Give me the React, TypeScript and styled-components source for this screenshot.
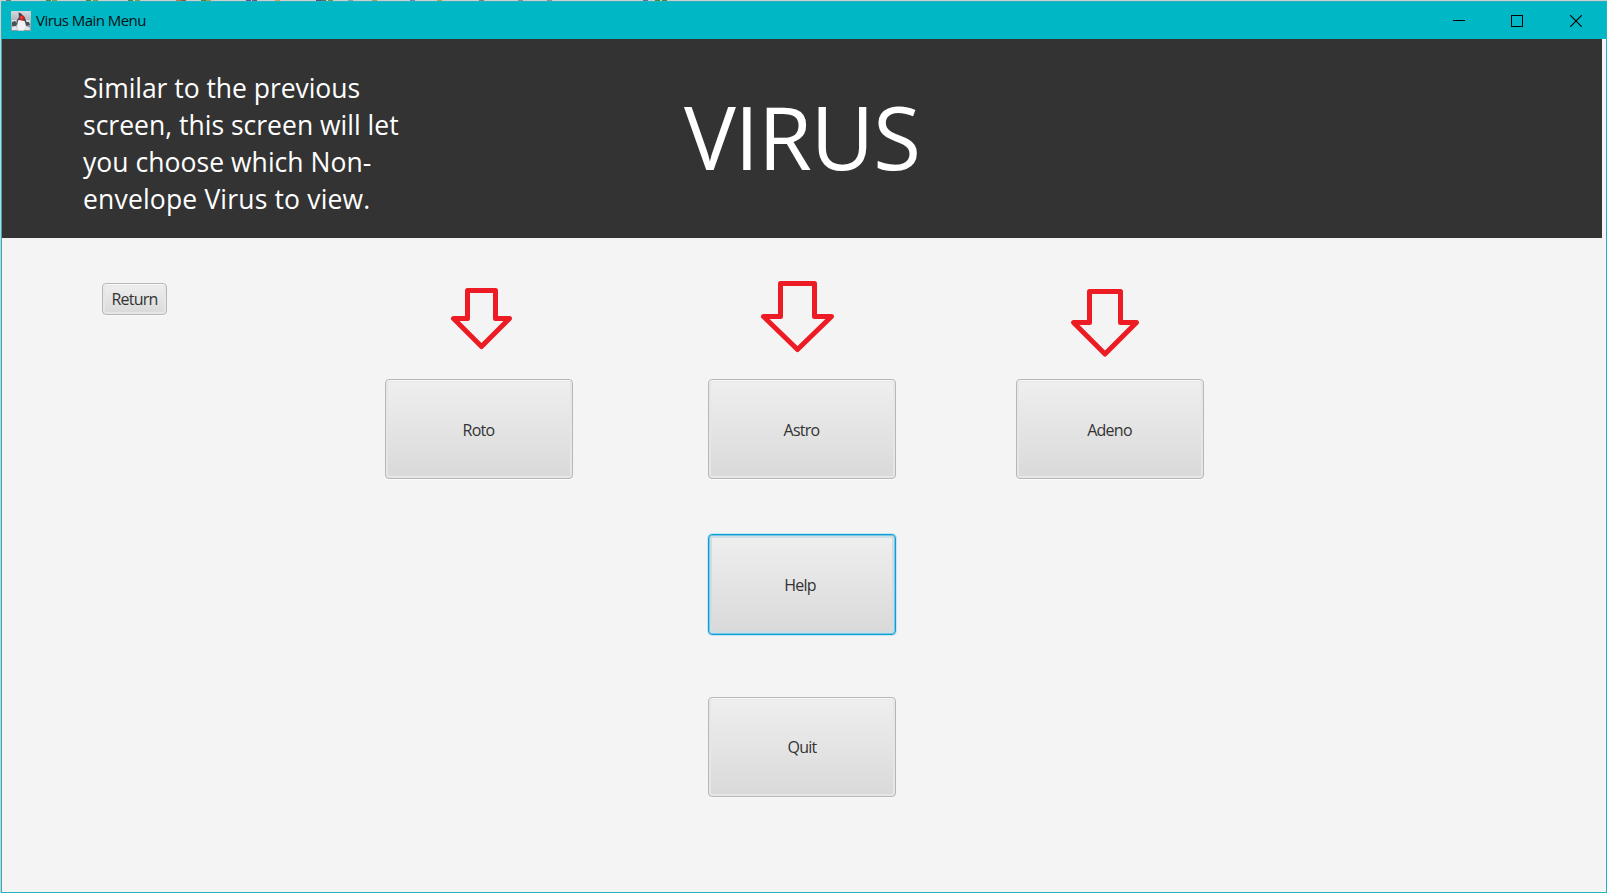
import React from "react";
import styled, { createGlobalStyle } from "styled-components";

const GlobalStyle = createGlobalStyle`
  *, *::before, *::after { box-sizing: border-box; }
  body { margin: 0; overflow: hidden; }
`;

const uiFont = `"Open Sans", "Noto Sans", sans-serif`;

const backdropSpecks = [
  [6, "#5d7f8a"], [46, "#3f8a45"], [52, "#76a04c"], [86, "#3f8a45"], [93, "#76a04c"],
  [128, "#3f8a45"], [135, "#76a04c"], [176, "#b57b4a"], [181, "#8a5a4a"], [201, "#3f8a45"],
  [206, "#b09b45"], [246, "#6b4f9a"], [252, "#5c5f7f"], [275, "#d09a55"], [316, "#5d4a7f"],
  [321, "#3f7a65"], [328, "#5c9a55"], [348, "#7fa0b0"], [372, "#a09b55"], [410, "#6f83b5"],
  [437, "#b0a055"], [479, "#8a7a6a"], [518, "#8a8f95"], [547, "#8a8f95"], [643, "#5d6f9a"],
  [655, "#3f8a45"], [662, "#3f8a45"],
] as const;

const Desktop = styled.div`
  width: 1607px;
  height: 893px;
  padding: 1px 0 0 1px;
  background: ${backdropSpecks
    .map(([x, c]) => `linear-gradient(${c}, ${c}) ${x}px 0 / 5px 1px no-repeat`)
    .join(", ")}, #cbcfcf;
  font-family: ${uiFont};
`;

const Window = styled.main`
  display: flex;
  flex-direction: column;
  width: 1606px;
  height: 892px;
  border: 1px solid #22b2c0;
  background: #f4f4f4;
`;

const TitleBar = styled.header`
  display: flex;
  align-items: center;
  flex: 0 0 37px;
  padding-left: 9px;
  background: #00b7c6;
`;

const WindowTitle = styled.span`
  flex: 1;
  margin: 0 0 2px 5px;
  color: #001214;
  font-size: 15px;
  line-height: 20px;
  letter-spacing: -0.55px;
`;

const WindowControls = styled.div`
  display: flex;
  gap: 46px;
  padding-right: 24px;
  svg { display: block; }
`;

const Banner = styled.section`
  display: flex;
  flex: 0 0 199px;
  width: 1600px;
  padding-left: 81px;
  background: #333;
  color: #fff;
`;

const Note = styled.p`
  width: 340px;
  margin: 31px 0 0;
  font-size: 26.5px;
  line-height: 37px;
  white-space: nowrap;
`;

const NoteLine = styled.span<{ $spacing: number }>`
  display: block;
  letter-spacing: ${(p) => p.$spacing}px;
`;

const Heading = styled.h1`
  margin: 38px 0 0 261px;
  font-size: 87px;
  font-weight: 400;
  line-height: 118px;
  letter-spacing: -1px;
`;

const Menu = styled.section`
  display: grid;
  grid-template-columns: 383px 188px 135px 188px 120px 188px;
  grid-template-rows: 141px 100px 55px 101px 62px 100px;
`;

const Cell = styled.div<{ $col: number; $row: number }>`
  display: flex;
  grid-column: ${(p) => p.$col};
  grid-row: ${(p) => p.$row};
  svg { display: block; }
`;

const MenuButton = styled.button<{ $focused?: boolean }>`
  width: 100%;
  height: 100%;
  padding: ${(p) => (p.$focused ? "0 4px 0 0" : "2px 1px 0 0")};
  border: 1px solid ${(p) => (p.$focused ? "#0f9ed3" : "#b7b7b7")};
  border-radius: 4px;
  background: linear-gradient(#efefef, #d9d9d9);
  box-shadow: ${(p) =>
    p.$focused
      ? "inset 0 0 0 1px #7cc8e4, inset 0 0 0 3px #cfdee4, 0 0 0 1px #c5e7f3"
      : "inset 0 1px 0 #fbfbfb, inset 0 0 0 2px #e6e6e6, 0 1px 0 #fafafa"};
  color: #333;
  font: 400 16px/20px ${uiFont};
  letter-spacing: -0.75px;
`;

const ReturnButton = styled(MenuButton)`
  width: 65px;
  height: 32px;
  margin: 45px 0 0 100px;
  padding: 0 0 1px;
`;

const QuitButton = styled(MenuButton)`
  padding: 0;
`;

type Point = [number, number];

const Arrow = ({ points }: { points: Point[] }) => (
  <svg width="188" height="141" viewBox="0 0 188 141">
    <polygon
      points={points.map((p) => p.join(",")).join(" ")}
      fill="none"
      stroke="#ed1c24"
      strokeWidth="5"
      strokeLinejoin="round"
    />
  </svg>
);

const arrowPoints = (l: number, r: number, top: number, tipL: number, tipR: number, neck: number, bottom: number): Point[] => [
  [l, top], [r, top], [r, neck], [tipR, neck], [(tipL + tipR) / 2, bottom], [tipL, neck], [l, neck],
];

const choices = [
  { label: "Roto", col: 2, arrow: arrowPoints(82.5, 110.5, 52.5, 68.5, 124.5, 80.5, 108.5) },
  { label: "Astro", col: 4, arrow: arrowPoints(72.5, 106.5, 45.5, 55.5, 123.5, 78.5, 111.5) },
  { label: "Adeno", col: 6, arrow: arrowPoints(73.5, 104.5, 53.5, 57.5, 120.5, 84.5, 116) },
];

const AppIcon = () => (
  <svg width="20" height="20" viewBox="0 0 20 20">
    <defs>
      <linearGradient id="tile" x1="0" y1="0" x2="0" y2="1">
        <stop offset="0" stopColor="#d3d8dc" />
        <stop offset="1" stopColor="#8d979e" />
      </linearGradient>
    </defs>
    <rect width="20" height="20" rx="1" fill="url(#tile)" />
    <path d="M1 9h18v3H1z" fill="#dce1e4" />
    <path d="M7.500 1.500l2 .5 4 4 2 5-1 3H6l-.5-4 2.500-4z" fill="#41474c" />
    <path d="M7 9.500l3-1 4 2 1 6-2 3H7l-1-4z" fill="#f3f3f3" />
    <path d="M1 11l3-1 2 2-1 3H1zM15 11l3 0 1 3-4 1z" fill="#4a5157" />
    <path d="M1 16l4-1 2 4H1zM15 15l4 2v2h-5z" fill="#e3e6e8" />
    <circle cx="11" cy="7" r="2.600" fill="#cf2128" />
    <circle cx="10.500" cy="6.500" r="1" fill="#ef5a5e" />
  </svg>
);

export default function App() {
  return (
    <>
      <GlobalStyle />
      <Desktop>
        <Window>
          <TitleBar>
            <AppIcon />
            <WindowTitle>Virus Main Menu</WindowTitle>
            <WindowControls>
              <svg width="12" height="12" shapeRendering="crispEdges"><path d="M0 5.5h12" stroke="#000" /></svg>
              <svg width="12" height="12" shapeRendering="crispEdges"><rect x=".5" y=".5" width="11" height="11" fill="none" stroke="#000" /></svg>
              <svg width="13" height="12"><path d="M1.200.2l11.600 11.600M12.800.2L1.200 11.800" stroke="#000" strokeWidth="1.2" /></svg>
            </WindowControls>
          </TitleBar>
          <Banner>
            <Note>
              <NoteLine $spacing={-0.04}>Similar to the previous</NoteLine>
              <NoteLine $spacing={0.01}>screen, this screen will let</NoteLine>
              <NoteLine $spacing={0.04}>you choose which Non-</NoteLine>
              <NoteLine $spacing={0.17}>envelope Virus to view.</NoteLine>
            </Note>
            <Heading>VIRUS</Heading>
          </Banner>
          <Menu>
            <Cell $col={1} $row={1}>
              <ReturnButton>Return</ReturnButton>
            </Cell>
            {choices.map(({ label, col, arrow }) => (
              <React.Fragment key={label}>
                <Cell $col={col} $row={1}><Arrow points={arrow} /></Cell>
                <Cell $col={col} $row={2}><MenuButton>{label}</MenuButton></Cell>
              </React.Fragment>
            ))}
            <Cell $col={4} $row={4}><MenuButton $focused>Help</MenuButton></Cell>
            <Cell $col={4} $row={6}><QuitButton>Quit</QuitButton></Cell>
          </Menu>
        </Window>
      </Desktop>
    </>
  );
}
